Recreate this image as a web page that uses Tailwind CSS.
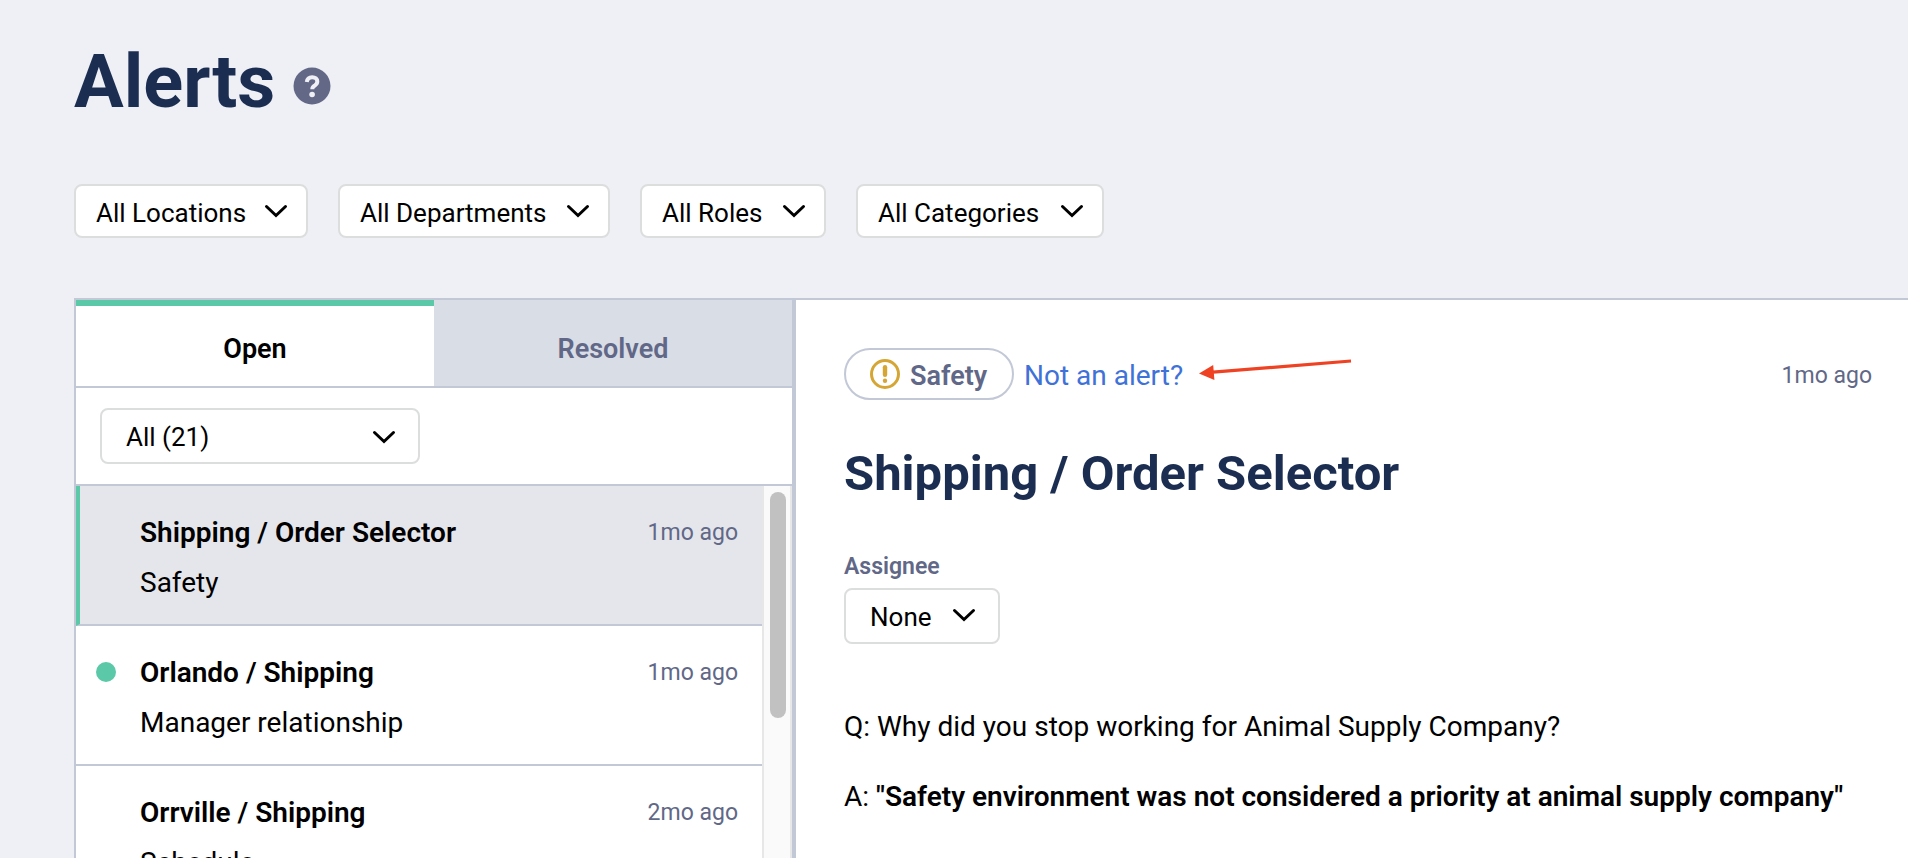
<!DOCTYPE html>
<html lang="en">
<head>
  <meta charset="UTF-8" />
  <meta name="viewport" content="width=device-width, initial-scale=1.0"/>
  <title>Alerts</title>
  <script src="https://cdn.jsdelivr.net/npm/@tailwindcss/browser@4"></script>
</head>
<body class="flex h-screen flex-col overflow-hidden bg-[#eff0f5] pl-[74px] font-['Roboto',sans-serif] text-[28px] leading-8 text-black">

  <!-- Page title -->
  <header class="flex items-center gap-[18px] pt-9">
    <h1 class="pt-1 text-[74px] leading-[84px] font-bold text-[#1b2d51]">Alerts</h1>
    <button type="button" aria-label="Help" class="pt-3">
      <svg class="size-[38px]" viewBox="0 0 38 38" fill="none">
        <circle cx="19" cy="19" r="18.5" fill="#636887"/>
        <path d="M13.800 15c.4-3.300 2.500-4.800 5.400-4.800 3 0 5.100 1.700 5.100 4.400 0 2.300-1.300 3.200-2.800 4.200-1.500.9-2.200 1.600-2.200 3.400" stroke="#eff0f5" stroke-width="4"/>
        <circle cx="19.100" cy="27.500" r="2.800" fill="#eff0f5"/>
      </svg>
    </button>
  </header>

  <!-- Filters -->
  <div class="mt-[60px] flex gap-[30px] text-[26px]">
    <div class="relative">
      <select aria-label="Locations" class="h-[54px] w-[234px] appearance-none rounded-lg border-2 border-[#dcdddd] bg-white pt-[3px] pl-5">
        <option>All Locations</option>
      </select>
      <svg class="pointer-events-none absolute top-5 right-5 h-[14px] w-6" viewBox="0 0 24 14" fill="none" stroke="#000" stroke-width="3" stroke-linecap="round"><path d="M2.500 2.500 12 11.500l9.500-9"/></svg>
    </div>
    <div class="relative">
      <select aria-label="Departments" class="h-[54px] w-[272px] appearance-none rounded-lg border-2 border-[#dcdddd] bg-white pt-[3px] pl-5">
        <option>All Departments</option>
      </select>
      <svg class="pointer-events-none absolute top-5 right-5 h-[14px] w-6" viewBox="0 0 24 14" fill="none" stroke="#000" stroke-width="3" stroke-linecap="round"><path d="M2.500 2.500 12 11.500l9.500-9"/></svg>
    </div>
    <div class="relative">
      <select aria-label="Roles" class="h-[54px] w-[186px] appearance-none rounded-lg border-2 border-[#dcdddd] bg-white pt-[3px] pl-5">
        <option>All Roles</option>
      </select>
      <svg class="pointer-events-none absolute top-5 right-5 h-[14px] w-6" viewBox="0 0 24 14" fill="none" stroke="#000" stroke-width="3" stroke-linecap="round"><path d="M2.500 2.500 12 11.500l9.500-9"/></svg>
    </div>
    <div class="relative">
      <select aria-label="Categories" class="h-[54px] w-[248px] appearance-none rounded-lg border-2 border-[#dcdddd] bg-white pt-[3px] pl-5">
        <option>All Categories</option>
      </select>
      <svg class="pointer-events-none absolute top-5 right-5 h-[14px] w-6" viewBox="0 0 24 14" fill="none" stroke="#000" stroke-width="3" stroke-linecap="round"><path d="M2.500 2.500 12 11.500l9.500-9"/></svg>
    </div>
  </div>

  <main class="mt-[60px] flex min-h-0 flex-1 border-t-2 border-l-2 border-[#c2c8d6] bg-white">

    <!-- Alert list -->
    <section class="flex w-[720px] shrink-0 flex-col border-r-4 border-[#c2c8d6]">
      <div class="grid h-[88px] shrink-0 grid-cols-2 border-b-2 border-[#c2c8d6] text-[27px] font-semibold">
        <button type="button" class="border-t-6 border-[#5bc8a8] bg-white pt-[6px]">Open</button>
        <button type="button" class="border-t-6 border-[#d9dde6] bg-[#d9dde6] pt-[6px] text-[#616887]">Resolved</button>
      </div>

      <div class="shrink-0 border-b-2 border-[#c2c8d6] px-6 py-5 text-[26px]">
        <div class="relative w-80">
          <select aria-label="Alert type" class="block h-14 w-full appearance-none rounded-lg border-2 border-[#dcdddd] bg-white pt-[2px] pl-6">
            <option>All (21)</option>
          </select>
          <svg class="pointer-events-none absolute top-[22px] right-6 h-[14px] w-6" viewBox="0 0 24 14" fill="none" stroke="#000" stroke-width="3" stroke-linecap="round"><path d="M2.500 2.500 12 11.500l9.500-9"/></svg>
        </div>
      </div>

      <div class="flex min-h-0 flex-1 overflow-hidden">
        <ul class="flex-1">
          <li class="flex h-[140px] border-b-2 border-l-4 border-b-[#c2c8d6] border-l-[#5bc8a8] bg-[#e5e6eb] pt-[31px] pr-6 pl-15">
            <div class="flex-1">
              <h3 class="font-semibold">Shipping / Order Selector</h3>
              <p class="mt-[18px]">Safety</p>
            </div>
            <span class="text-[23px] text-[#616887]">1mo ago</span>
          </li>
          <li class="flex h-[140px] border-b-2 border-[#c2c8d6] pt-[31px] pr-6 pl-5">
            <span class="mt-[5px] mr-6 size-5 rounded-full bg-[#5bc8a8]"></span>
            <div class="flex-1">
              <h3 class="font-semibold">Orlando / Shipping</h3>
              <p class="mt-[18px]">Manager relationship</p>
            </div>
            <span class="text-[23px] text-[#616887]">1mo ago</span>
          </li>
          <li class="flex h-[140px] border-b-2 border-[#c2c8d6] pt-[31px] pr-6 pl-16">
            <div class="flex-1">
              <h3 class="font-semibold">Orrville / Shipping</h3>
              <p class="mt-[18px]">Schedule</p>
            </div>
            <span class="text-[23px] text-[#616887]">2mo ago</span>
          </li>
        </ul>
        <!-- Scroll track -->
        <div class="w-[30px] border-x-2 border-[#e7e7e7] bg-[#fafafa] px-[6px] pt-[6px]">
          <div class="h-[226px] w-4 rounded-full bg-[#c1c1c1]"></div>
        </div>
      </div>
    </section>

    <!-- Alert detail -->
    <article class="flex-1 overflow-hidden pt-12 pr-9 pl-12">
      <div class="flex items-center">
        <span class="flex h-[52px] w-[170px] items-center gap-[10px] rounded-full border-2 border-[#c2c8d6] pl-6 text-[27px] font-semibold text-[#616887]">
          <svg class="size-[30px] shrink-0" viewBox="0 0 30 30" fill="none">
            <circle cx="15" cy="15" r="13.500" stroke="#d5a634" stroke-width="3"/>
            <path d="M15 8.200v7.600" stroke="#d5a634" stroke-width="4.400" stroke-linecap="round"/>
            <circle cx="15" cy="21.800" r="2.200" fill="#d5a634"/>
          </svg>
          <span class="pt-1">Safety</span>
        </span>
        <a href="#" class="ml-[10px] pt-1 text-[#3f72d8]">Not an alert?</a>
        <svg class="mt-[10px] ml-4 h-[22px] w-[154px] self-start" viewBox="0 0 154 22" fill="none">
          <path d="M14 14.200 152 3" stroke="#ee4223" stroke-width="3.200"/>
          <path d="M0 15.500 14.200 7l1.200 15z" fill="#ee4223"/>
        </svg>
        <span class="ml-auto pt-1 text-[23px] text-[#616887]">1mo ago</span>
      </div>

      <h2 class="mt-11 text-[49px] leading-[60px] font-bold text-[#1b2d51]">Shipping / Order Selector</h2>

      <label for="assignee" class="mt-[47px] block text-[23px] font-semibold text-[#616887]">Assignee</label>
      <div class="relative mt-[5px] w-[156px] text-[26px]">
        <select id="assignee" class="block h-14 w-full appearance-none rounded-lg border-2 border-[#dcdddd] bg-white pt-[2px] pl-6">
          <option>None</option>
        </select>
        <svg class="pointer-events-none absolute top-5 right-6 h-[14px] w-6" viewBox="0 0 24 14" fill="none" stroke="#000" stroke-width="3" stroke-linecap="round"><path d="M2.500 2.500 12 11.500l9.500-9"/></svg>
      </div>

      <p class="mt-[67px] whitespace-nowrap">Q: Why did you stop working for Animal Supply Company?</p>
      <p class="mt-[38px] whitespace-nowrap">A: <strong class="font-semibold">"Safety environment was not considered a priority at animal supply company"</strong></p>
    </article>
  </main>
</body>
</html>
